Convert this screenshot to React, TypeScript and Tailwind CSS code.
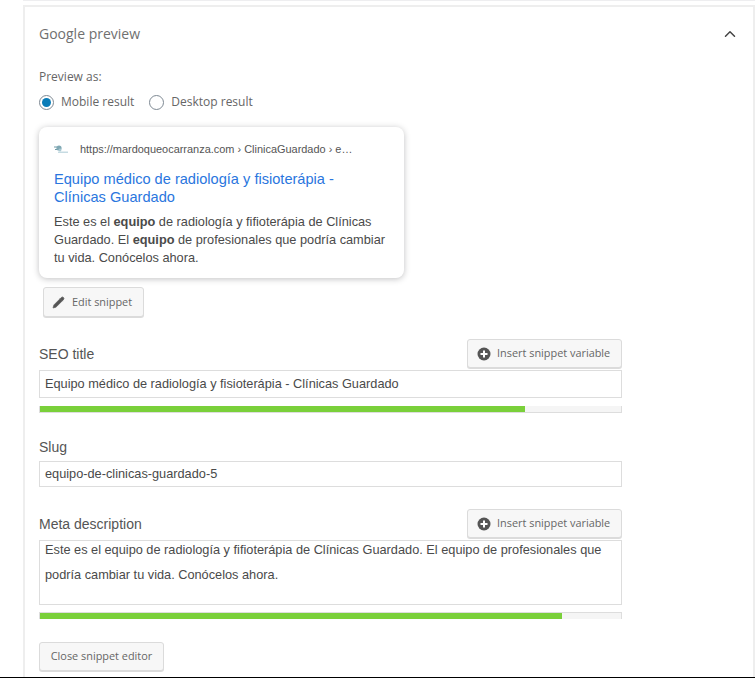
import { ChevronUp, Pencil } from 'lucide-react'

function PlusCircle() {
  return (
    <svg width="14" height="14" viewBox="0 0 14 14" className="shrink-0">
      <circle cx="7" cy="7" r="6.5" fill="#555" />
      <path d="M7 3.5v7M3.5 7h7" stroke="#fff" strokeWidth="2" />
    </svg>
  )
}

function Favicon() {
  return (
    <svg width="15" height="10" viewBox="0 0 15 10" className="shrink-0">
      <path d="M0 3h3M1 5.5h3" stroke="#6f9aa6" strokeWidth="1" />
      <circle cx="5" cy="4" r="2.6" fill="#7fa8b4" />
      <path d="M4 7.5h10v1.5H4z" fill="#c6dbe2" />
      <circle cx="6" cy="6" r="1.4" fill="#a9c9d3" />
    </svg>
  )
}

function InsertButton() {
  return (
    <button
      type="button"
      className="flex h-[29px] w-[155px] items-center gap-[6px] rounded-[3px] border border-[#dbdbdb] bg-[#f7f7f7] pl-[9px] font-['Open_Sans',sans-serif] text-[10.9px] text-[#666] shadow-[0_1px_0_rgba(204,204,204,0.7)]"
    >
      <PlusCircle />
      Insert snippet variable
    </button>
  )
}

function Radio({ checked, label }: { checked?: boolean; label: string }) {
  return (
    <label className="flex items-center gap-[7px]">
      <span className="flex h-[15px] w-[15px] items-center justify-center rounded-full border border-[#7e8993] bg-white">
        {checked && <span className="h-[9px] w-[9px] rounded-full bg-[#0a7cb8]" />}
      </span>
      {label}
    </label>
  )
}

function Progress({ width, clipped }: { width: string; clipped?: boolean }) {
  return (
    <div className={`h-[7px] w-[583px] bg-[#f5f5f5] border-x border-[#dddddd] ${clipped ? 'border-t' : 'border-b'}`}>
      <div className={`h-[6px] bg-[#7ad03a] ${width}`} />
    </div>
  )
}

export default function App() {
  return (
    <div className="h-[678px] w-[755px] overflow-hidden bg-white font-['Liberation_Sans',sans-serif] text-[#555]">
      <div className="ml-[23px] h-[5px] border-t border-[#eeeef0]" />
      <div className="ml-[23px] flex h-[672px] flex-col border-x-2 border-t-2 border-[#eeeeee] pl-[14px]">
        <div className="flex h-[53px] items-center justify-between pr-[14px]">
          <span className="font-['Open_Sans',sans-serif] text-[14px] text-[#707070]">Google preview</span>
          <ChevronUp size={18} strokeWidth={2} className="text-[#444]" />
        </div>
        <div className="mt-[9px] font-['Open_Sans',sans-serif] text-[12px] leading-[16px] text-[#666]">Preview as:</div>
        <div className="mt-[9px] flex gap-[15px] font-['Open_Sans',sans-serif] text-[12px] leading-[16px] text-[#666]">
          <Radio checked label="Mobile result" />
          <Radio label="Desktop result" />
        </div>

        <div className="mt-[17px] h-[151px] w-[365px] rounded-[8px] bg-white pl-[15px] pt-[14px] shadow-[0_1px_6px_rgba(32,33,36,0.28)]">
          <div className="flex items-center gap-[11px] text-[10.95px] leading-[16px] text-[#555]">
            <Favicon />
            https://mardoqueocarranza.com › ClinicaGuardado › e…
          </div>
          <div className="mt-[13px] w-[320px] text-[14.6px] leading-[18px] text-[#2a76de]">
            Equipo médico de radiología y fisioterápia - Clínicas Guardado
          </div>
          <div className="mt-[7px] w-[338px] text-[12.75px] leading-[18px] text-[#4a4a4a]">
            Este es el <b>equipo</b> de radiología y fifioterápia de Clínicas Guardado. El <b>equipo</b> de profesionales que podría cambiar tu vida. Conócelos ahora.
          </div>
        </div>

        <button
          type="button"
          className="mt-[9px] ml-[4px] flex h-[30px] w-[101px] items-center gap-[7px] rounded-[3px] border border-[#dbdbdb] bg-[#f7f7f7] pl-[8px] font-['Open_Sans',sans-serif] text-[10.9px] text-[#666] shadow-[0_1px_0_rgba(204,204,204,0.7)]"
        >
          <Pencil size={13} fill="#555" strokeWidth={1.5} />
          Edit snippet
        </button>

        <div className="mt-[22px] flex w-[583px] items-center justify-between">
          <span className="mt-[1px] text-[14px]">SEO title</span>
          <InsertButton />
        </div>
        <div className="mt-[2px] flex h-[28px] w-[583px] items-center border border-[#dddddd] pl-[5px] text-[12.75px] text-[#4a4a4a]">
          Equipo médico de radiología y fisioterápia - Clínicas Guardado
        </div>
        <div className="mt-[8px]">
          <Progress width="w-[485px]" />
        </div>

        <div className="mt-[25px] text-[14px] leading-[18px]">Slug</div>
        <div className="mt-[5px] flex h-[26px] w-[583px] items-center border border-[#dddddd] pl-[5px] text-[12.75px] text-[#4a4a4a]">
          equipo-de-clinicas-guardado-5
        </div>

        <div className="mt-[22px] flex w-[583px] items-center justify-between">
          <span className="mt-[1px] text-[14px]">Meta description</span>
          <InsertButton />
        </div>
        <div className="mt-[2px] h-[65px] w-[583px] border border-[#dddddd] px-[5px] text-[12.75px] leading-[25px] text-[#4a4a4a]">
          <div className="-mt-[4px]">
            Este es el equipo de radiología y fifioterápia de Clínicas Guardado. El equipo de profesionales que podría cambiar tu vida. Conócelos ahora.
          </div>
        </div>
        <div className="mt-[7px]">
          <Progress width="w-[522px]" clipped />
        </div>

        <button
          type="button"
          className="mt-[23px] flex h-[29px] w-[125px] items-center justify-center rounded-[3px] border border-[#dbdbdb] bg-[#f7f7f7] font-['Open_Sans',sans-serif] text-[10.9px] text-[#666] shadow-[0_1px_0_rgba(204,204,204,0.7)]"
        >
          Close snippet editor
        </button>
      </div>
      <div className="h-px bg-black" />
    </div>
  )
}
